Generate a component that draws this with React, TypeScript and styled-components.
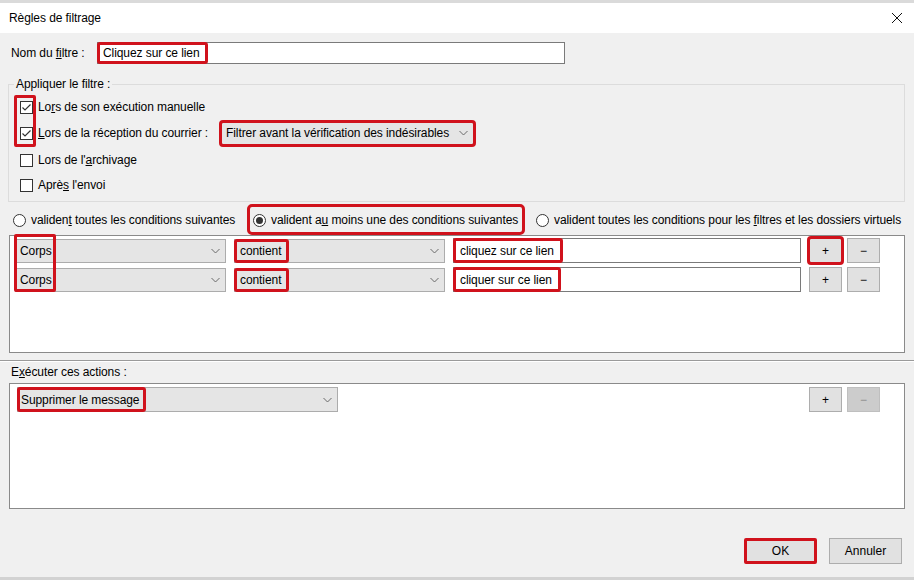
import React from "react";
import styled, { createGlobalStyle, css } from "styled-components";

const RED = "#d0121c";

const GlobalStyle = createGlobalStyle`
  html, body {
    margin: 0;
    padding: 0;
    background: #f0f0f0;
  }
  body {
    font-family: "Liberation Sans", Arial, sans-serif;
    font-size: 12px;
    letter-spacing: -0.08px;
    color: #000;
  }
`;

// red annotation frame, drawn inside the box so layout doesn't move
const marked = css`
  outline: 3px solid ${RED};
  outline-offset: -2px;
  border-radius: 2px;
`;

const Window = styled.div`
  width: 914px;
  height: 580px;
  box-sizing: border-box;
  border-top: 3px solid #dadada;
  border-bottom: 3px solid #d2d2d2;
  background: #f0f0f0;
  display: flex;
  flex-direction: column;
  overflow: hidden;
`;

const TitleBar = styled.div`
  height: 30px;
  flex-shrink: 0;
  background: #fff;
  display: flex;
  align-items: center;
  justify-content: space-between;
  padding: 0 11px 0 9px;
`;

const Body = styled.div`
  flex: 1;
  display: flex;
  flex-direction: column;
  padding: 9px 9px 0 9px;
`;

const NameRow = styled.div`
  display: flex;
  align-items: center;
  height: 22px;
  padding-left: 2px;
`;

const NameLabel = styled.span`
  width: 86px;
`;

const TextBox = styled.div<{ $w: number; $h?: number }>`
  width: ${(p) => p.$w}px;
  height: ${(p) => p.$h ?? 25}px;
  box-sizing: border-box;
  background: #fff;
  border: 1px solid #7a7a7a;
  display: flex;
  align-items: stretch;
`;

const Value = styled.span<{ $mark?: boolean; $pl?: number; $pr?: number }>`
  display: flex;
  align-items: center;
  padding: 0 ${(p) => p.$pr ?? 4}px 0 ${(p) => p.$pl ?? 4}px;
  white-space: nowrap;
  ${(p) => p.$mark && marked}
`;

const Select = styled.div<{ $w: number; $h?: number; $mark?: boolean }>`
  width: ${(p) => p.$w}px;
  height: ${(p) => p.$h ?? 25}px;
  box-sizing: border-box;
  background: #e5e5e5;
  border: 1px solid #acacac;
  display: flex;
  align-items: stretch;
  padding-right: 5px;
  ${(p) =>
    p.$mark &&
    css`
      outline: 3px solid ${RED};
      outline-offset: -1px;
      border-radius: 2px;
    `}
`;

const ChevronBox = styled.span`
  margin-left: auto;
  display: flex;
  align-items: center;
`;

const Chevron = () => (
  <ChevronBox>
    <svg width="9" height="6" viewBox="0 0 9 6">
      <path d="M0.5 1 L4.5 5 L8.5 1" fill="none" stroke="#6a6a6a" strokeWidth="1" />
    </svg>
  </ChevronBox>
);

const Group = styled.fieldset`
  margin: 12px 0 0 -1px;
  padding: 3px 0 4px 11px;
  border: 1px solid #dcdcdc;
  min-width: 0;
`;

const Legend = styled.legend`
  padding: 0 2px;
  margin-left: -6px;
  line-height: 16px;
`;

const OptionGrid = styled.div`
  display: grid;
  grid-template-columns: 13px 1fr;
  grid-template-rows: 24px 28px 26px 24px;
  column-gap: 5px;
  align-items: center;
`;

const CheckFrame = styled.div`
  grid-column: 1;
  grid-row: 1 / 3;
  align-self: stretch;
  margin: 0 -3px 0 -6px;
  border: 3px solid ${RED};
  border-radius: 2px;
  pointer-events: none;
  z-index: 1;
`;

const Box = styled.span<{ $row: number }>`
  grid-column: 1;
  grid-row: ${(p) => p.$row};
  width: 13px;
  height: 13px;
  box-sizing: border-box;
  border: 1px solid #333;
  background: #fff;
  display: flex;
  align-items: center;
  justify-content: center;
`;

const Checkbox = ({ checked, row }: { checked?: boolean; row: number }) => (
  <Box $row={row}>
    {checked && (
      <svg width="11" height="11" viewBox="0 0 11 11">
        <path d="M1.5 5.5 L4 8 L9.5 2.5" fill="none" stroke="#333" strokeWidth="1.2" />
      </svg>
    )}
  </Box>
);

const OptionLabel = styled.div<{ $row: number }>`
  grid-column: 2;
  grid-row: ${(p) => p.$row};
  display: flex;
  align-items: center;
`;

const ReceptionLabel = styled.span`
  width: 183px;
`;

const RadioRow = styled.div`
  display: flex;
  align-items: center;
  height: 20px;
  margin-top: 8px;
  padding-left: 4px;
  gap: 15px;
`;

const RadioItem = styled.label<{ $mark?: boolean; $w: number }>`
  display: flex;
  align-items: center;
  gap: 5px;
  width: ${(p) => p.$w}px;
  white-space: nowrap;
  ${(p) =>
    p.$mark &&
    css`
      padding: 6px 1px 5px 3px;
      margin: -6px -1px -5px -3px;
      outline: 3px solid ${RED};
      border-radius: 2px;
    `}
`;

const RadioCircle = styled.span<{ $on?: boolean }>`
  width: 13px;
  height: 13px;
  flex-shrink: 0;
  box-sizing: border-box;
  border: 1px solid #333;
  border-radius: 50%;
  background: #fff;
  display: flex;
  align-items: center;
  justify-content: center;
  &::after {
    content: "";
    display: ${(p) => (p.$on ? "block" : "none")};
    width: 7px;
    height: 7px;
    border-radius: 50%;
    background: #333;
  }
`;

const ListBox = styled.div<{ $h: number }>`
  height: ${(p) => p.$h}px;
  box-sizing: border-box;
  background: #fff;
  border: 1px solid #8a8a8a;
`;

const Conditions = styled(ListBox)`
  margin-top: 5px;
  padding: 2px 0 0 5px;
`;

const ConditionGrid = styled.div`
  display: grid;
  grid-template-columns: 211px 211px 348px auto;
  grid-template-rows: 25px 25px;
  justify-content: start;
  column-gap: 8px;
  row-gap: 4px;
  align-items: center;
`;

const Cell = styled.div<{ $c: number; $r: number }>`
  grid-column: ${(p) => p.$c};
  grid-row: ${(p) => p.$r};
  display: flex;
`;

const CorpsFrame = styled.div`
  grid-column: 1;
  grid-row: 1 / 3;
  justify-self: start;
  align-self: stretch;
  width: 42px;
  box-sizing: border-box;
  margin: -4px 0 0 -1px;
  border: 3px solid ${RED};
  border-radius: 2px;
  pointer-events: none;
  z-index: 1;
`;

const ButtonPair = styled.div`
  display: flex;
  gap: 5px;
`;

const SmallButton = styled.button<{ $disabled?: boolean; $mark?: boolean }>`
  width: 33px;
  height: 25px;
  box-sizing: border-box;
  padding: 0;
  font: inherit;
  font-size: 12px;
  display: flex;
  align-items: center;
  justify-content: center;
  background: ${(p) => (p.$disabled ? "#cccccc" : "#e1e1e1")};
  border: 1px solid ${(p) => (p.$disabled ? "#bfbfbf" : "#adadad")};
  color: ${(p) => (p.$disabled ? "#8c8c8c" : "#000")};
  ${(p) =>
    p.$mark &&
    css`
      outline: 3px solid ${RED};
      outline-offset: -1px;
      border-radius: 2px;
    `}
`;

const Splitter = styled.div`
  margin: 7px -9px 0 -9px;
  border-top: 1px solid #9a9a9a;
  border-bottom: 1px solid #fff;
`;

const SectionLabel = styled.div`
  margin-top: 2px;
  padding-left: 2px;
  line-height: 16px;
`;

const Actions = styled(ListBox)`
  margin-top: 3px;
  padding: 3px 24px 0 7px;
  display: flex;
  align-items: flex-start;
  justify-content: space-between;
`;

const Footer = styled.div`
  display: flex;
  justify-content: flex-end;
  gap: 12px;
  margin-top: 29px;
  padding-right: 3px;
`;

const DialogButton = styled.button<{ $mark?: boolean }>`
  width: 73px;
  height: 26px;
  box-sizing: border-box;
  font: inherit;
  font-size: 12px;
  background: #e1e1e1;
  border: 1px solid #adadad;
  ${(p) =>
    p.$mark &&
    css`
      border: 3px solid ${RED};
      border-radius: 2px;
    `}
`;

const CloseIcon = () => (
  <svg width="12" height="12" viewBox="0 0 12 12">
    <path d="M1 1 L11 11 M11 1 L1 11" stroke="#111" strokeWidth="1" />
  </svg>
);

const ConditionRow = ({ row, text, markPlus }: { row: number; text: string; markPlus?: boolean }) => (
  <>
    <Cell $c={1} $r={row}>
      <Select $w={211} $h={24}>
        <Value>Corps</Value>
        <Chevron />
      </Select>
    </Cell>
    <Cell $c={2} $r={row}>
      <Select $w={211} $h={24}>
        <Value $mark $pl={5} $pr={7}>
          contient
        </Value>
        <Chevron />
      </Select>
    </Cell>
    <Cell $c={3} $r={row}>
      <TextBox $w={348}>
        <Value $mark $pl={6} $pr={8}>
          {text}
        </Value>
      </TextBox>
    </Cell>
    <Cell $c={4} $r={row}>
      <ButtonPair>
        <SmallButton $mark={markPlus}>+</SmallButton>
        <SmallButton>−</SmallButton>
      </ButtonPair>
    </Cell>
  </>
);

export default function App() {
  return (
    <Window>
      <GlobalStyle />
      <TitleBar>
        <span>Règles de filtrage</span>
        <CloseIcon />
      </TitleBar>
      <Body>
        <NameRow>
          <NameLabel>
            Nom du <u>fi</u>ltre :
          </NameLabel>
          <TextBox $w={468} $h={22}>
            <Value $mark $pl={5} $pr={7}>
              Cliquez sur ce lien
            </Value>
          </TextBox>
        </NameRow>

        <Group>
          <Legend>Appliquer le filtre :</Legend>
          <OptionGrid>
            <Checkbox checked row={1} />
            <OptionLabel $row={1}>
              <span>
                Lo<u>r</u>s de son exécution manuelle
              </span>
            </OptionLabel>
            <Checkbox checked row={2} />
            <OptionLabel $row={2}>
              <ReceptionLabel>
                <u>L</u>ors de la réception du courrier :
              </ReceptionLabel>
              <Select $w={253} $h={23} $mark>
                <Value $pl={4}>Filtrer avant la vérification des indésirables</Value>
                <Chevron />
              </Select>
            </OptionLabel>
            <CheckFrame />
            <Checkbox row={3} />
            <OptionLabel $row={3}>
              <span>
                Lors de l'<u>a</u>rchivage
              </span>
            </OptionLabel>
            <Checkbox row={4} />
            <OptionLabel $row={4}>
              <span>
                Aprè<u>s</u> l'envoi
              </span>
            </OptionLabel>
          </OptionGrid>
        </Group>

        <RadioRow>
          <RadioItem $w={225}>
            <RadioCircle />
            <span>
              validen<u>t</u> toutes les conditions suivantes
            </span>
          </RadioItem>
          <RadioItem $w={268} $mark>
            <RadioCircle $on />
            <span>
              valident a<u>u</u> moins une des conditions suivantes
            </span>
          </RadioItem>
          <RadioItem $w={366}>
            <RadioCircle />
            <span>
              valident toutes les conditions pour les <u>f</u>iltres et les dossiers virtuels
            </span>
          </RadioItem>
        </RadioRow>

        <Conditions $h={118}>
          <ConditionGrid>
            <ConditionRow row={1} text="cliquez sur ce lien" markPlus />
            <ConditionRow row={2} text="cliquer sur ce lien" />
            <CorpsFrame />
          </ConditionGrid>
        </Conditions>

        <Splitter />
        <SectionLabel>
          E<u>x</u>écuter ces actions :
        </SectionLabel>

        <Actions $h={126}>
          <Select $w={321}>
            <Value $mark $pl={3} $pr={6}>
              Supprimer le message
            </Value>
            <Chevron />
          </Select>
          <ButtonPair>
            <SmallButton>+</SmallButton>
            <SmallButton $disabled>−</SmallButton>
          </ButtonPair>
        </Actions>

        <Footer>
          <DialogButton $mark>OK</DialogButton>
          <DialogButton>Annuler</DialogButton>
        </Footer>
      </Body>
    </Window>
  );
}
